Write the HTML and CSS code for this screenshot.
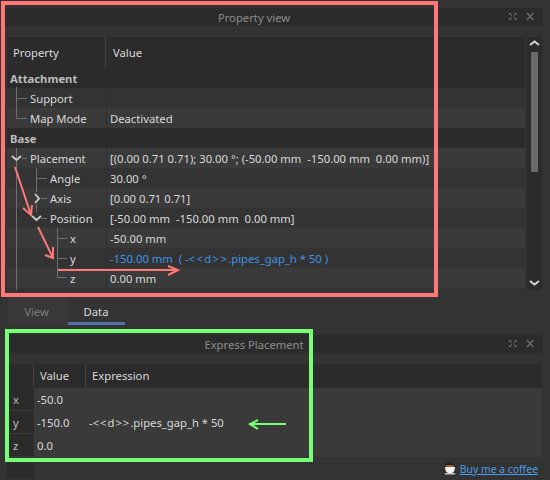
FILE: index.html
```html
<!DOCTYPE html>
<html lang="en">
<head>
    <meta charset="UTF-8">
    <title>Property view</title>
    <link rel="stylesheet" href="styles.css">
</head>
<body>
    <div class="page">
        <div class="titlebar">
            <span class="title">Property view</span>
            <svg class="title-icons" width="26" height="10" viewBox="0 0 26 10">
                <path d="M1.5 3V1.5H3.5M6.5 1.5H8.5V3M8.5 6V7.5H6.5M3.5 7.5H1.5V6M4 4L2.5 2.5M6 4L7.5 2.5M4 5L2.5 6.5M6 5L7.5 6.5"/>
                <path d="M19 1L25.5 8M25.5 1L19 8" stroke-width="1.5"/>
            </svg>
        </div>

        <div class="prop-wrap">
            <div class="tree">
                <div class="row head"><div class="name">Property</div><div class="val">Value</div></div>
                <div class="row cat">Attachment</div>
                <div class="row"><div class="name l1">Support</div><div class="val"></div></div>
                <div class="row alt"><div class="name l1">Map Mode</div><div class="val">Deactivated</div></div>
                <div class="row cat">Base</div>
                <div class="row alt"><div class="name l1">Placement</div><div class="val">[(0.00 0.71 0.71); 30.00 °; (-50.00 mm  -150.00 mm  0.00 mm)]</div></div>
                <div class="row"><div class="name l2">Angle</div><div class="val">30.00 °</div></div>
                <div class="row alt"><div class="name l2">Axis</div><div class="val">[0.00 0.71 0.71]</div></div>
                <div class="row"><div class="name l2">Position</div><div class="val">[-50.00 mm  -150.00 mm  0.00 mm]</div></div>
                <div class="row alt"><div class="name l3">x</div><div class="val">-50.00 mm</div></div>
                <div class="row"><div class="name l3">y</div><div class="val bound">-150.00 mm  ( -<span class="angle">&lt;&lt;d&gt;&gt;</span>.pipes_gap_h * 50 )</div></div>
                <div class="row alt"><div class="name l3">z</div><div class="val">0.00 mm</div></div>

                <!-- branch lines and expanders -->
                <svg class="branches" width="100" height="253" viewBox="0 37 100 253">
                    <g class="line">
                        <path d="M16.5 87V118.5H27M16.5 98.5H27"/>
                        <path d="M16.5 148V290M22 158.5H27"/>
                        <path d="M36.5 168V192M36.5 204V212M36.5 178.5H47M41 198.5H47M41 218.5H47"/>
                        <path d="M57.5 228V277.5H67M57.5 238.5H67M57.5 258.5H67"/>
                    </g>
                    <g class="chev">
                        <path d="M12 156L16.5 160L21 156"/>
                        <path d="M35 194L39 198.5L35 203"/>
                        <path d="M32 216L36.5 220L41 216"/>
                    </g>
                </svg>
            </div>
            <div class="scrollbar">
                <svg width="15" height="10" viewBox="0 0 15 10"><path d="M3 7L7.5 3.5L12 7"/></svg>
                <div class="thumb"></div>
                <svg width="15" height="10" viewBox="0 0 15 10"><path d="M3 3L7.5 6.5L12 3"/></svg>
            </div>
        </div>

        <div class="tabs">
            <div class="tab">View</div>
            <div class="tab active">Data</div>
        </div>

        <div class="titlebar second">
            <span class="title">Express Placement</span>
            <svg class="title-icons" width="26" height="10" viewBox="0 0 26 10">
                <path d="M1.5 3V1.5H3.5M6.5 1.5H8.5V3M8.5 6V7.5H6.5M3.5 7.5H1.5V6M4 4L2.5 2.5M6 4L7.5 2.5M4 5L2.5 6.5M6 5L7.5 6.5"/>
                <path d="M19 1L25.5 8M25.5 1L19 8" stroke-width="1.5"/>
            </svg>
        </div>

        <div class="expr">
            <div class="ehead">
                <div class="corner"></div>
                <div class="ecol-val">Value</div>
                <div class="ecol-expr">Expression</div>
            </div>
            <div class="erow"><div class="side">x</div><div class="ecell">-50.0</div><div class="ecell expr-text"></div></div>
            <div class="erow"><div class="side">y</div><div class="ecell">-150.0</div><div class="ecell expr-text">-<span class="angle">&lt;&lt;d&gt;&gt;</span>.pipes_gap_h * 50</div></div>
            <div class="erow"><div class="side">z</div><div class="ecell">0.0</div><div class="ecell expr-text"></div></div>
            <div class="side-empty"></div>
        </div>

        <div class="coffee">
            <svg width="12" height="12" viewBox="0 0 12 12">
                <path d="M3 0H9L10 2H2Z" fill="#1e1e1e"/>
                <path d="M2.5 2H9.5V4H2.5Z" fill="#a5643c"/>
                <path d="M1 4H11C11 7.5 9.5 9.5 8 10H4C2.5 9.5 1 7.5 1 4Z" fill="#f2f2f2"/>
                <path d="M1 10H11V11.5H1Z" fill="#c8c8c8"/>
            </svg>
            <a class="coffee-link" href="#">Buy me a coffee</a>
        </div>

        <!-- annotations drawn over the screenshot -->
        <svg class="marks" width="550" height="480" viewBox="0 0 550 480">
            <rect class="red-box" x="3" y="3" width="433" height="292"/>
            <g class="red-arrow">
                <path d="M15 167L31 215M23 208L31 215L32 205"/>
                <path d="M38 227L53 258M45 255L53 258L53 247"/>
                <path d="M58 270H178M168 266L178 270L168 275"/>
            </g>
            <rect class="green-box" x="7" y="331" width="304" height="129"/>
            <path class="green-arrow" d="M250 424H286M258 420L250 424L258 429"/>
        </svg>
    </div>
</body>
</html>
```

FILE: styles.css
```css
/* general styling */
* {
    box-sizing: border-box;
    margin: 0;
    padding: 0;
}

html, body {
    height: 100%;
    background-color: #333;
}

body {
    font-family: "Noto Sans", "Open Sans", sans-serif;
    font-size: 11.25px;
    color: #d9d9d9;
    overflow: hidden;
}

.page {
    position: relative;
    width: 550px;
    height: 480px;
    padding-top: 8px;
}

/* dock titles */
.titlebar {
    position: relative;
    height: 18px;
    margin: 0 7px 0 5px;
    background-color: #2b2b2b;
    color: #8c8c8c;
    line-height: 20px;
    text-align: center;
}

.titlebar.second {
    margin-top: 10px;
}

.title {
    position: relative;
    left: -20px;
}

.title-icons {
    position: absolute;
    right: 9px;
    top: 4px;
    fill: none;
    stroke: #6b6b6b;
}

/* property tree */
.prop-wrap {
    display: flex;
    margin: 11px 7px 0;
    height: 253px;
}

.tree {
    position: relative;
    width: 518px;
    height: 251px;
}

.row {
    display: flex;
    height: 20px;
    line-height: 21px;
    background-color: #333;
    white-space: pre;
}

.row.alt {
    background-color: #3a3a3a;
}

.row.head {
    height: 31px;
    line-height: 32px;
    background-color: #2b2b2b;
}

.row.cat {
    padding-left: 3px;
    font-weight: bold;
    color: #bdbdbd;
    background-color: #2b2b2b;
}

.name {
    width: 99px;
    flex: none;
}

.head .name {
    padding-left: 6px;
    border-right: 1px solid #444;
}

.l1 { padding-left: 23px; }
.l2 { padding-left: 43px; }
.l3 { padding-left: 63px; }

.val {
    flex: 1;
    padding-left: 3px;
    border-left: 1px solid #2f2f2f;
}

.head .val {
    padding-left: 7px;
    border-left: 0;
}

.val.bound {
    color: #3f95e6;
}

.angle {
    letter-spacing: 1.4px;
}

.branches {
    position: absolute;
    left: -7px;
    top: 0;
    fill: none;
}

.line path {
    stroke: #6f6f6f;
}

.chev path {
    stroke: #cfcfcf;
    stroke-width: 1.8;
}

.scrollbar {
    display: flex;
    flex-direction: column;
    align-items: center;
    width: 15px;
    margin-left: 2px;
    background-color: #2b2b2b;
}

.scrollbar svg {
    flex: none;
    fill: none;
    stroke: #d9d9d9;
    stroke-width: 1.8;
}

.scrollbar svg:first-child {
    margin-top: 1px;
}

.scrollbar svg:last-child {
    margin-top: auto;
    margin-bottom: 2px;
}

.thumb {
    width: 7px;
    height: 120px;
    margin-top: 4px;
    background-color: #6a6a6a;
}

/* tabs */
.tabs {
    display: flex;
    margin: 8px 0 0 8px;
    height: 27px;
}

.tab {
    width: 60px;
    padding-right: 3px;
    background-color: #383838;
    color: #7f7f7f;
    line-height: 27px;
    text-align: center;
}

.tab.active {
    width: 57px;
    padding-right: 1px;
    background-color: #333;
    color: #d9d9d9;
    border-bottom: 3px solid #4f70a8;
}

/* expression table */
.expr {
    margin: 11px 8px 0 7px;
}

.ehead {
    display: flex;
    height: 24px;
    line-height: 24px;
    background-color: #2b2b2b;
}

.corner {
    width: 27px;
    border-right: 1px solid #444;
}

.ecol-val {
    width: 52px;
    padding-left: 6px;
    border-right: 1px solid #444;
}

.ecol-expr {
    padding-left: 6px;
}

.erow {
    display: flex;
    height: 23px;
    line-height: 23px;
    background-color: #3a3a3a;
}

.side {
    width: 27px;
    height: 22px;
    padding-left: 6px;
    background-color: #2b2b2b;
    color: #bdbdbd;
}

.ecell {
    width: 52px;
    padding-left: 3px;
}

.expr-text {
    flex: 1;
    padding-left: 3px;
}

.expr-text .angle {
    letter-spacing: 1px;
}

.side-empty {
    width: 27px;
    height: 16px;
    margin-top: 6px;
    background-color: #2b2b2b;
}

.coffee {
    position: absolute;
    right: 12px;
    bottom: 4px;
    display: flex;
    align-items: center;
    gap: 4px;
}

.coffee-link {
    font-size: 10.4px;
    color: #4a9eea;
}

/* hand drawn marks on top */
.marks {
    position: absolute;
    left: 0;
    top: 0;
    fill: none;
    pointer-events: none;
}

.red-box {
    stroke: #ff7878;
    stroke-width: 4;
}

.red-arrow path {
    stroke: #ff7878;
    stroke-width: 2;
}

.green-box {
    stroke: #78ff78;
    stroke-width: 4;
}

.green-arrow {
    stroke: #78ff78;
    stroke-width: 2;
}
```
